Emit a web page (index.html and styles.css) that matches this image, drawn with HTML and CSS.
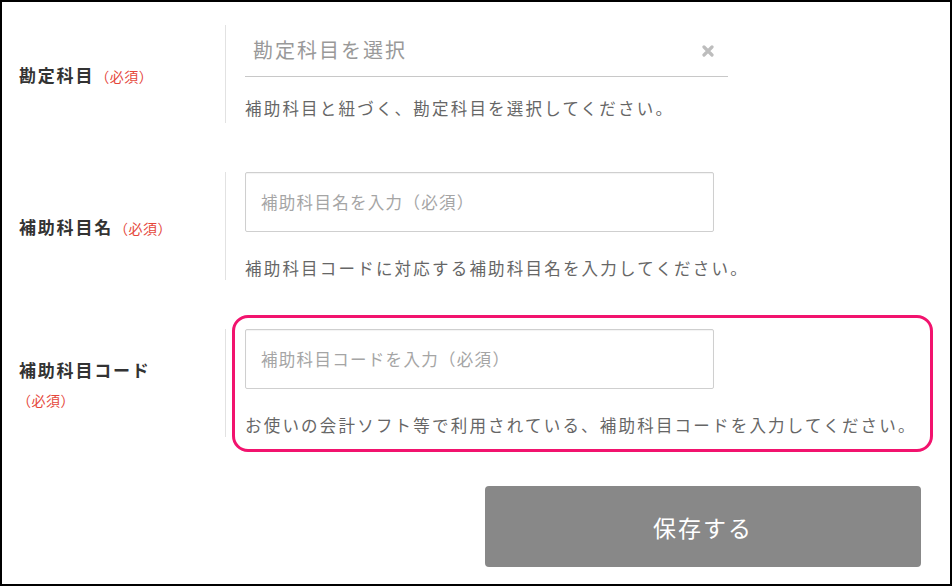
FILE: index.html
```html
<!DOCTYPE html>
<html lang="ja">
<head>
<meta charset="utf-8">
<link rel="stylesheet" href="styles.css">
</head>
<body>
<div class="frame">
  <div class="row row--first">
    <div class="label"><span class="label-text">勘定科目</span><span class="req">（必須）</span></div>
    <div class="field">
      <div class="select">
        <span class="select-text">勘定科目を選択</span>
        <svg class="clear" width="12" height="12" viewBox="0 0 12 12"><path d="M2 2L10 10M10 2L2 10" stroke="#bdbdbd" stroke-width="3.2" stroke-linecap="round"/></svg>
      </div>
      <p class="help help--first">補助科目と紐づく、勘定科目を選択してください。</p>
    </div>
  </div>
  <div class="row">
    <div class="label"><span class="label-text">補助科目名</span><span class="req">（必須）</span></div>
    <div class="field">
      <input class="input" type="text" placeholder="補助科目名を入力（必須）">
      <p class="help">補助科目コードに対応する補助科目名を入力してください。</p>
    </div>
  </div>
  <div class="row row--highlight">
    <div class="label label--stack"><span class="label-text">補助科目コード</span><span class="req">（必須）</span></div>
    <div class="field">
      <input class="input" type="text" placeholder="補助科目コードを入力（必須）">
      <p class="help">お使いの会計ソフト等で利用されている、補助科目コードを入力してください。</p>
    </div>
    <div class="highlight"></div>
  </div>
  <div class="actions">
    <button class="save" type="button">保存する</button>
  </div>
</div>
</body>
</html>
```

FILE: styles.css
```css
* { box-sizing: border-box; }
html, body { margin: 0; padding: 0; background: #fff; }
body {
  font-family: "Noto Sans CJK JP", "Noto Sans", sans-serif;
  color: #333;
}
.frame {
  width: 952px;
  height: 586px;
  border: 2px solid #000;
  padding: 23px 29px 0 0;
  display: flex;
  flex-direction: column;
  gap: 49px;
}
.row {
  display: flex;
  align-items: center;
  position: relative;
}
.label {
  width: 223px;
  padding-left: 17px;
  padding-top: 3px;
  line-height: 30px;
}
.label-text {
  font-size: 17px;
  font-weight: 700;
  letter-spacing: 1.8px;
  color: #333;
}
.req {
  font-size: 14px;
  color: #e5473b;
  margin-left: 1px;
  letter-spacing: 0.5px;
}
.label--stack .req { display: block; margin-left: -2px; }
.field {
  flex: 1;
  border-left: 1px solid #e2e2e2;
  padding-left: 19px;
}
.select {
  width: 483px;
  height: 52px;
  border-bottom: 1px solid #c8c8c8;
  display: flex;
  align-items: center;
  justify-content: space-between;
  padding: 0 14px 2px 8px;
}
.select-text {
  font-size: 20px;
  letter-spacing: 2px;
  color: #999;
}
.clear { display: block; margin-top: 2px; }
.help {
  margin: 24px 0 0;
  font-size: 16.5px;
  line-height: 24px;
  letter-spacing: 2.2px;
  color: #666;
}
.help--first { margin-top: 19px; padding-bottom: 3px; }
.input {
  display: block;
  width: 469px;
  height: 60px;
  border: 1px solid #cfcfcf;
  border-radius: 2px;
  padding: 0 15px;
  font-family: inherit;
  font-size: 16.5px;
  letter-spacing: 1.3px;
  color: #333;
  outline: none;
  box-shadow: inset 0 1px 1px rgba(0,0,0,0.05);
}
.input::placeholder { color: #a5a5a5; }
.highlight {
  position: absolute;
  left: 230px;
  top: -14px;
  width: 701px;
  height: 137px;
  border: 3px solid #f2136e;
  border-radius: 16px;
  pointer-events: none;
}
.actions {
  display: flex;
  justify-content: flex-end;
}
.save {
  width: 436px;
  height: 81px;
  background: #888;
  border: none;
  border-radius: 4px;
  color: #fff;
  font-family: inherit;
  font-size: 23px;
  letter-spacing: 2px;
}
```
